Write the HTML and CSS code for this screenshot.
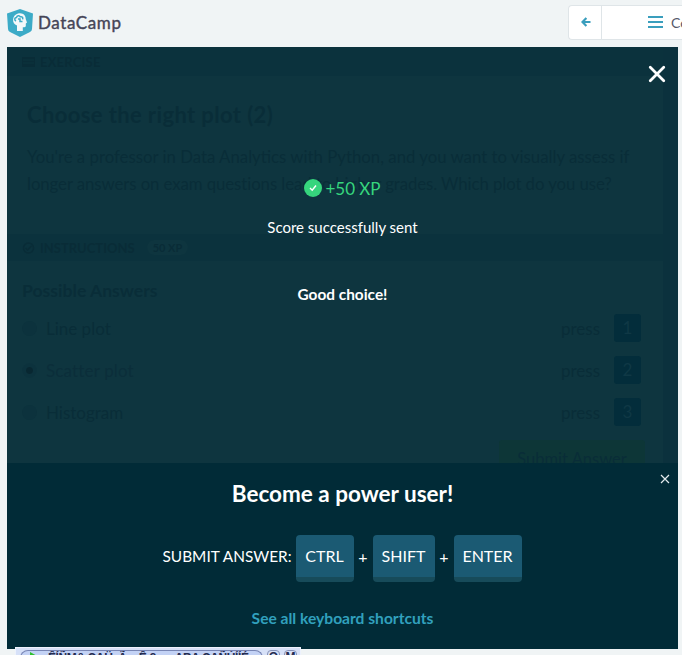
FILE: index.html
```html
<!DOCTYPE html>
<html lang="en">
<head>
<meta charset="utf-8">
<title>DataCamp</title>
<link rel="stylesheet" href="styles.css">
</head>
<body>
<header class="top">
  <div class="brand">
    <svg class="logo" viewBox="0 0 26 28"><path fill="#3cabc7" d="M13 0 26 4.500 25 20q0 2-2 3L13 28 3 23q-2-1-2-3L0 4.500Z"/><path fill="#f3f8fa" d="M10 22v-5.500C4.500 15 4.800 6 11 4.500c5-1.300 8 2.200 7.700 5.500l1.300 3.500-1.200 1v2.500c0 1-1 1.300-3 1.300V22Z"/><path fill="none" stroke="#3cabc7" stroke-width="1.500" d="M9 12c-2-1-1.500-3.500.5-3.500.3-2 3-2.500 3.700-.7 2-.5 3.200 1 2.300 2.500M11 10h2v2.500h2.500"/></svg>
    <span class="brand-name">DataCamp</span>
  </div>
  <nav class="nav">
    <span class="nav-back"><svg viewBox="0 0 10 10"><path d="M5.400 1 1.500 5l3.900 4M2 5h7.500" fill="none" stroke="#3a9ebd" stroke-width="2.200"/></svg></span>
    <span class="nav-menu"><i class="bars"></i><span>Course Outline</span></span>
  </nav>
</header>
<main class="panel">
  <section class="exercise">
    <div class="band"><svg class="mini" viewBox="0 0 13 12"><path d="M0 1h13v10H0z" fill="#092c37"/><path d="M1 4h11M1 7h11" stroke="#0d343f"/></svg><span>EXERCISE</span></div>
    <div class="question">
      <h1>Choose the right plot (2)</h1>
      <p>You're a professor in Data Analytics with Python, and you want to visually assess if<br><span class="second">longer answers on exam questions lead to higher grades. Which plot do you use?</span></p>
    </div>
    <div class="band band-inst"><svg class="mini" viewBox="0 0 12 12"><circle cx="6" cy="6" r="5" fill="none" stroke="#092c37" stroke-width="1.500"/><path d="m3 6 2 2 4-4" fill="none" stroke="#092c37" stroke-width="1.500"/></svg><span>INSTRUCTIONS</span><span class="pill">50 XP</span></div>
    <div class="answers">
      <h2>Possible Answers</h2>
      <div class="answer"><i class="radio"></i><span class="label">Line plot</span><span class="press">press</span><b class="num">1</b></div>
      <div class="answer"><i class="radio on"></i><span class="label faint">Scatter plot</span><span class="press">press</span><b class="num">2</b></div>
      <div class="answer"><i class="radio"></i><span class="label">Histogram</span><span class="press">press</span><b class="num">3</b></div>
      <div class="submit">Submit Answer</div>
    </div>
  </section>
  <div class="scroll"></div>
  <div class="result">
    <div class="xp"><svg viewBox="0 0 18 18"><circle cx="9" cy="9" r="9" fill="#36d57d"/><path d="m6 9 2.200 2.200L12 6.500" fill="none" stroke="#fff" stroke-width="1.400"/></svg><span>+50 XP</span></div>
    <div class="sent">Score successfully sent</div>
    <div class="good">Good choice!</div>
    <svg class="close" viewBox="0 0 16 16"><path d="m2 2 12 12M14 2 2 14" fill="none" stroke="#fff" stroke-width="2.500" stroke-linecap="round"/></svg>
  </div>
  <div class="power">
    <svg class="close-small" viewBox="0 0 10 10"><path d="m1 1 8 8M9 1 1 9" fill="none" stroke="#e4ebee" stroke-width="1.200"/></svg>
    <h3>Become a power user!</h3>
    <div class="keys"><span class="cmd">SUBMIT ANSWER:</span><kbd class="ctrl">CTRL</kbd><span class="plus">+</span><kbd class="shift">SHIFT</kbd><span class="plus">+</span><kbd class="enter">ENTER</kbd></div>
    <a class="all">See all keyboard shortcuts</a>
  </div>
</main>
<div class="player">
  <div class="track"><svg viewBox="0 0 9 10"><path d="M0 0 9 5 0 10z" fill="#2fc02f"/></svg><span>ÊÍÑM&amp; CAÜ, Ã « Ê ßæ , ABA CAÑÚÍÍÉ</span></div>
  <span class="pbtn">O</span><span class="pbtn">M</span>
</div>
</body>
</html>
```

FILE: styles.css
```css
* { box-sizing: border-box; }
body { margin: 0; width: 682px; height: 655px; overflow: hidden; background: #f0f4f5; font-family: Lato, sans-serif; position: relative; }
h1, h2, h3, p { margin: 0; }
.top { height: 47px; display: flex; justify-content: space-between; padding: 5px 0 0 7px; }
.brand { display: flex; align-items: flex-start; gap: 5px; padding-top: 4px; }
.logo { width: 26px; height: 28px; }
.brand-name { font-size: 17px; line-height: 28px; font-weight: 400; -webkit-text-stroke: .4px #454557; color: #454557; letter-spacing: .6px; }
.nav { display: flex; width: 114px; height: 35px; overflow: hidden; background: #fff; border: 1px solid #dfe5e8; border-right: 0; border-radius: 4px 0 0 4px; }
.nav-back { flex: none; width: 33px; border-right: 1px solid #dfe5e8; padding: 11px 0 0 12px; }
.nav-back svg { display: block; width: 10px; height: 10px; }
.nav-menu { flex: none; display: flex; align-items: center; gap: 8px; padding-left: 46px; font-size: 14px; color: #555869; white-space: nowrap; }
.bars { width: 15px; height: 12px; margin-top: -2px; border-top: 2px solid #3a9ebd; border-bottom: 2px solid #3a9ebd; background: linear-gradient(#3a9ebd, #3a9ebd) 0 3px / 100% 2px no-repeat; }
.panel { position: relative; display: flex; margin-left: 7px; width: 671px; height: 602px; overflow: hidden; background: #0e353f; color: #092d38; }
.exercise { width: 656px; }
.scroll { flex: 1; background: #0b313d; }
.band { height: 29px; display: flex; align-items: center; gap: 5px; padding: 1px 0 0 15px; background: #0b323d; font-size: 13px; font-weight: 700; color: #092c37; letter-spacing: .2px; }
.mini { width: 13px; height: 12px; }
.question { height: 158px; padding: 24px 20px 0; }
.question h1 { font-size: 22px; line-height: 30px; font-weight: 700; letter-spacing: .38px; }
.question p { margin-top: 13px; font-size: 16.800px; line-height: 27px; white-space: nowrap; }
.second { letter-spacing: -.08px; }
.band-inst { height: 27px; padding-top: 0; letter-spacing: 0; }
.pill { margin-left: 7px; padding: 1px 6px; border-radius: 9px; background: #0e353f; font-size: 11px; }
.answers { padding: 19px 22px 0 15px; display: flex; flex-direction: column; }
.answers h2 { font-size: 17.600px; line-height: 22px; margin-bottom: 5px; }
.answer { display: flex; align-items: center; height: 42px; font-size: 17px; }
.radio { width: 15px; height: 15px; margin-right: 9px; border-radius: 50%; background: #0c323d; }
.radio.on { background: radial-gradient(circle, #082731 0 3px, #0c323d 4px); }
.label { flex: 1; }
.faint { color: #0b2e3a; letter-spacing: .15px; }
.press { width: 53px; }
.num { width: 27px; height: 28px; border-radius: 3px; background: #032d3b; color: #0f3845; font-weight: 400; text-align: center; line-height: 28px; }
.submit { align-self: flex-end; margin: 7px -4px 0 0; width: 146px; height: 40px; border-radius: 3px; background: #0d3637; text-align: center; line-height: 39px; font-size: 16.500px; }
.result { position: absolute; inset: 0 0 186px; display: flex; flex-direction: column; align-items: center; color: #fff; }
.xp { display: flex; gap: 3px; margin-top: 130px; font-size: 17px; line-height: 24px; color: #36d57d; }
.xp svg { width: 18px; height: 18px; margin-top: 2px; }
.sent { margin-top: 16px; font-size: 15px; line-height: 20px; }
.good { margin-top: 47px; font-size: 15.400px; line-height: 20px; font-weight: 700; }
.close { position: absolute; width: 18px; height: 18px; right: 12px; top: 18px; }
.power { position: absolute; left: 0; right: 0; bottom: 0; height: 186px; display: flex; flex-direction: column; align-items: center; background: #012b37; color: #fff; }
.close-small { position: absolute; width: 10px; height: 10px; right: 8px; top: 11px; }
.power h3 { margin-top: 16px; font-size: 22.500px; line-height: 30px; }
.keys { display: flex; align-items: center; margin-top: 26px; margin-right: 1px; height: 47px; font-size: 16px; }
.cmd { width: 133px; white-space: nowrap; margin-top: -5px; font-size: 15.400px; }
kbd { height: 47px; border-radius: 4px; border-bottom: 5px solid #174b5a; background: #1b5a73; font: 16px/42px Lato, sans-serif; text-align: center; }
.ctrl { width: 58px; }
.shift { width: 62px; }
.enter { width: 68px; }
.plus { width: 19px; text-align: center; margin-top: -5px; }
.all { margin-top: 26px; font-size: 15.600px; line-height: 20px; font-weight: 700; color: #31a0bd; }
.player { position: absolute; left: 15px; top: 647px; width: 286px; height: 20px; display: flex; gap: 4px; padding: 2px 3px 0 4px; background: #d7e1f8; border: 1px solid #edf2fd; }
.track { flex: 1; display: flex; gap: 9px; overflow: hidden; padding-left: 9px; border: 1px solid #7885b4; border-bottom: 0; border-radius: 8px 8px 0 0; background: #c3d2f5; }
.track svg { width: 9px; height: 10px; margin-top: 1px; flex: none; }
.track span, .pbtn { font: 700 12px/13px "Liberation Sans", sans-serif; color: #252c50; white-space: nowrap; }
.track span { letter-spacing: -.4px; line-height: 15px; }
.pbtn { width: 13px; border: 1px solid #8792b8; border-radius: 4px; text-align: center; }
```
